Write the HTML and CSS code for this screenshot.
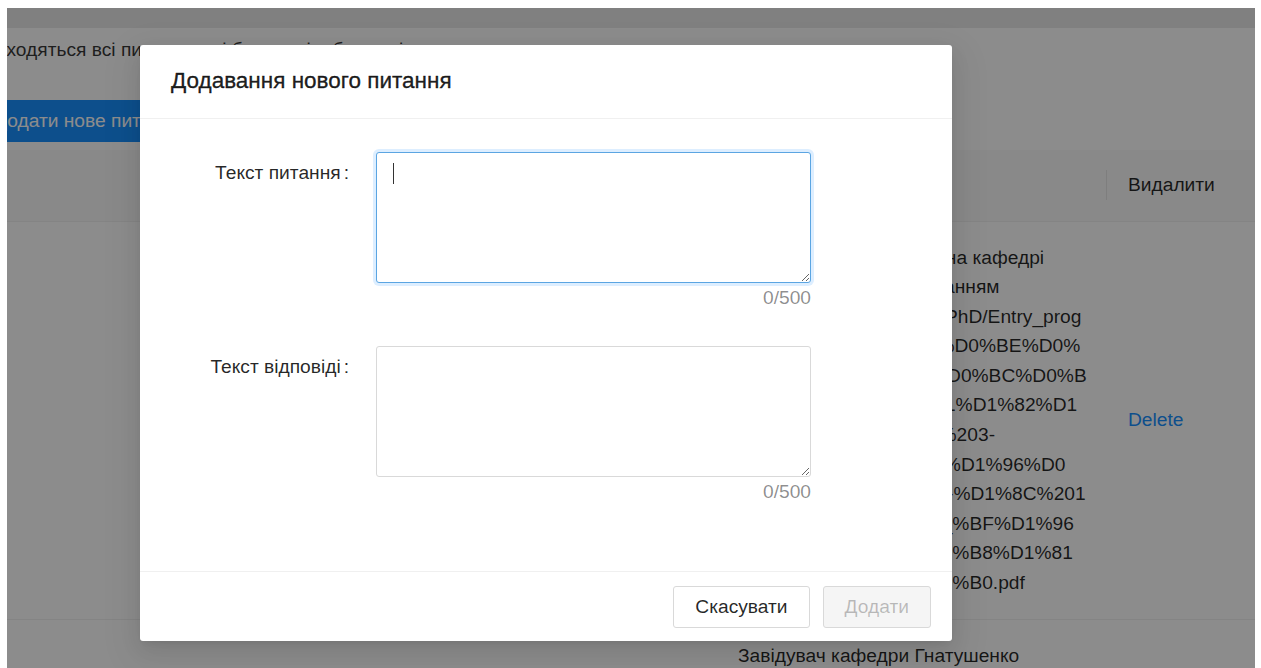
FILE: index.html
```html
<!DOCTYPE html>
<html lang="uk">
<head>
<meta charset="utf-8">
<title>Питання та відповіді</title>
<link rel="stylesheet" href="styles.css">
</head>
<body>
<div class="frame">
  <div class="topband"></div>
  <div class="content">
    <p class="intro">Тут знаходяться всі питання, які будуть відображені</p>
    <button class="btn-primary" type="button">Додати нове питання</button>
    <table class="table">
      <colgroup>
        <col class="col-q">
        <col class="col-a">
        <col class="col-del">
      </colgroup>
      <thead>
        <tr>
          <th class="th-q">Питання</th>
          <th class="th-a">Відповідь</th>
          <th>Видалити</th>
        </tr>
      </thead>
      <tbody>
        <tr>
          <td class="td-q">Де знайти програму іспиту?</td>
          <td class="td-a">
            <span class="ln">Усі деталі щодо вступу на кафедрі</span>
            <span class="ln">можна знайти за посиланням</span>
            <span class="ln">https://nmu.dp.ua/ua/pg/PhD/Entry_prog</span>
            <span class="ln">ram/%D0%9F%D1%80%D0%BE%D0%</span>
            <span class="ln">B3%D1%80%D0%B0-%D0%BC%D0%B</span>
            <span class="ln">80%D0%B0_2%D0%B21%D1%82%D1</span>
            <span class="ln">%83%D0%BF%D1%83%203-</span>
            <span class="ln">%D0%BA%D1%83%D1%D1%96%D0</span>
            <span class="ln">%D0%BD%D0%B8%D0-%D1%8C%201</span>
            <span class="ln">%D0%B4%D1%80%D0_%BF%D1%96</span>
            <span class="ln">%D0%B4%D0%BE%D0-%B8%D1%81</span>
            <span class="ln">%D0%BA%D0%B8%D0-%B0.pdf</span>
          </td>
          <td><a class="link" href="#">Delete</a></td>
        </tr>
        <tr>
          <td class="td-q">Хто керує кафедрою?</td>
          <td class="td-a">
            <span class="ln">Завідувач кафедри Гнатушенко</span>
            <span class="ln">Віктор Володимирович,</span>
            <span class="ln">доктор технічних наук,</span>
            <span class="ln">професор</span>
          </td>
          <td><a class="link" href="#">Delete</a></td>
        </tr>
      </tbody>
    </table>
  </div>

  <div class="mask"></div>

  <div class="modal" role="dialog" aria-labelledby="modal-title">
    <div class="modal-header">
      <div class="modal-title" id="modal-title">Додавання нового питання</div>
    </div>
    <div class="modal-body">
      <form class="form">
        <div class="form-row">
          <label class="form-label" for="q-text">Текст питання<span class="colon">:</span></label>
          <div class="form-control">
            <div class="field">
              <textarea id="q-text" class="textarea is-focused"></textarea>
              <span class="caret"></span>
            </div>
            <div class="count">0/500</div>
          </div>
        </div>
        <div class="form-row">
          <label class="form-label" for="a-text">Текст відповіді<span class="colon">:</span></label>
          <div class="form-control">
            <div class="field">
              <textarea id="a-text" class="textarea"></textarea>
            </div>
            <div class="count">0/500</div>
          </div>
        </div>
      </form>
    </div>
    <div class="modal-footer">
      <button class="btn" type="button">Скасувати</button>
      <button class="btn" type="button" disabled>Додати</button>
    </div>
  </div>
</div>
</body>
</html>
```

FILE: styles.css
```css
* {
  box-sizing: border-box;
}

html,
body {
  margin: 0;
  background: #fff;
}

body {
  font-family: "Liberation Sans", Arial, sans-serif;
  font-size: 19.2px;
  color: rgba(0, 0, 0, 0.85);
}

/* page area */
.frame {
  position: relative;
  margin: 8px 6px 0 7px;
  height: 660px;
  overflow: hidden;
  background: #e9e9e9;
}

.topband {
  height: 20px;
}

.content {
  margin-left: -65px;
  height: 640px;
  padding-top: 8px;
  background: #fff;
}

.intro {
  margin: 0;
  line-height: 28px;
  white-space: nowrap;
  color: rgba(0, 0, 0, 0.8);
}

.btn-primary {
  display: block;
  margin: 36px 0 0 31px;
  height: 42px;
  padding: 0 20px;
  border: 1px solid #1890ff;
  border-radius: 3px;
  background: #1890ff;
  color: #fff;
  font: inherit;
}

/* table */
.table {
  margin-top: 8px;
  width: 1313px;
  border-collapse: collapse;
  table-layout: fixed;
}

.col-q {
  width: 775px;
}

.col-a {
  width: 390px;
}

.col-del {
  width: 148px;
}

.table th {
  position: relative;
  height: 71px;
  padding: 0 21px;
  background: #fafafa;
  border-bottom: 1px solid #f0f0f0;
  text-align: left;
  font-weight: normal;
  color: rgba(0, 0, 0, 0.85);
  white-space: nowrap;
}

.table th.th-q {
  text-align: center;
}

.table th.th-q::before,
.table th.th-a::before {
  content: "";
  position: absolute;
  right: 0;
  top: 50%;
  width: 1px;
  height: 30px;
  transform: translateY(-50%);
  background: rgba(0, 0, 0, 0.08);
}

.table td {
  padding: 21px;
  line-height: 29.6px;
  border-bottom: 1px solid #f0f0f0;
  vertical-align: middle;
}

.table td.td-q {
  text-align: center;
}

.ln {
  display: block;
  white-space: nowrap;
}

.link {
  color: #1890ff;
  text-decoration: none;
}

/* overlay */
.mask {
  position: absolute;
  inset: 0;
  background: rgba(0, 0, 0, 0.45);
}

.modal {
  position: absolute;
  left: 133px;
  top: 37px;
  width: 812px;
  background: #fff;
  border-radius: 3px;
  box-shadow: 0 4px 8px -5px rgba(0, 0, 0, 0.12), 0 8px 20px 0 rgba(0, 0, 0, 0.08), 0 12px 36px 10px rgba(0, 0, 0, 0.05);
}

.modal-header {
  padding: 22px 31px 23px;
  border-bottom: 1px solid #f0f0f0;
}

.modal-title {
  font-size: 22.5px;
  line-height: 28px;
  color: rgba(0, 0, 0, 0.88);
  -webkit-text-stroke: 0.35px rgba(0, 0, 0, 0.85);
}

.modal-body {
  padding: 33px 31px 65px;
}

.form {
  display: flex;
  flex-direction: column;
  gap: 34px;
  margin: 0;
}

.form-row {
  display: grid;
  grid-template-columns: 205px 435px;
}

.form-label {
  padding-right: 27px;
  line-height: 42px;
  text-align: right;
  white-space: nowrap;
  color: rgba(0, 0, 0, 0.85);
}

.colon {
  margin-left: 3px;
}

.field {
  position: relative;
}

.textarea {
  display: block;
  width: 100%;
  height: 131px;
  padding: 6px 14px;
  border: 1px solid #d9d9d9;
  border-radius: 3px;
  font: inherit;
  line-height: 28px;
  color: rgba(0, 0, 0, 0.85);
  resize: vertical;
  outline: none;
}

.textarea.is-focused {
  border-color: #5ba5e2;
  box-shadow: 0 0 0 3px rgba(24, 144, 255, 0.15);
}

.caret {
  position: absolute;
  left: 17px;
  top: 11px;
  width: 1px;
  height: 21px;
  background: #333;
}

.count {
  text-align: right;
  line-height: 29px;
  color: rgba(0, 0, 0, 0.45);
}

.modal-footer {
  display: flex;
  justify-content: flex-end;
  gap: 13px;
  padding: 14px 21px 13px;
  border-top: 1px solid #f0f0f0;
}

.btn {
  height: 42px;
  padding: 0 21px;
  border: 1px solid #d9d9d9;
  border-radius: 3px;
  background: #fff;
  font: inherit;
  color: rgba(0, 0, 0, 0.85);
}

.btn:disabled {
  background: #f5f5f5;
  color: rgba(0, 0, 0, 0.25);
}
```
